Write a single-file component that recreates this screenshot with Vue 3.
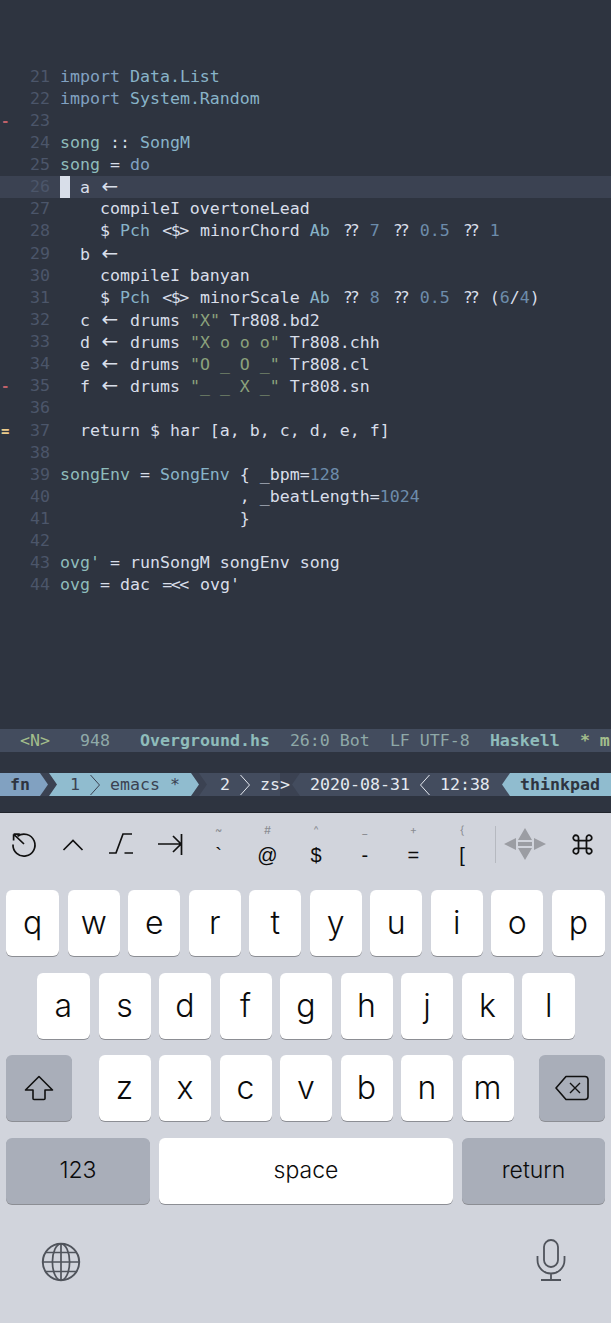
<script setup>
const arrow = ['a', '←']
const q = ['q', '??']
const lines = [
  { n: 21, t: [['k', 'import '], ['c', 'Data.List']] },
  { n: 22, t: [['k', 'import '], ['c', 'System.Random']] },
  { n: 23, t: [], g: 'del' },
  { n: 24, t: [['f', 'song'], ['w', ' :: '], ['c', 'SongM']] },
  { n: 25, t: [['f', 'song'], ['w', ' = '], ['k', 'do']] },
  { n: 26, t: [['w', '  a '], arrow], cur: true },
  { n: 27, t: [['w', '    compileI overtoneLead']] },
  { n: 28, t: [['w', '    $ '], ['c', 'Pch'], ['w', ' '], ['l', '<$>'], ['w', ' minorChord '], ['c', 'Ab'], ['w', ' '], q, ['w', ' '], ['m', '7'], ['w', ' '], q, ['w', ' '], ['m', '0.5'], ['w', ' '], q, ['w', ' '], ['m', '1']] },
  { n: 29, t: [['w', '  b '], arrow] },
  { n: 30, t: [['w', '    compileI banyan']] },
  { n: 31, t: [['w', '    $ '], ['c', 'Pch'], ['w', ' '], ['l', '<$>'], ['w', ' minorScale '], ['c', 'Ab'], ['w', ' '], q, ['w', ' '], ['m', '8'], ['w', ' '], q, ['w', ' '], ['m', '0.5'], ['w', ' '], q, ['w', ' ('], ['m', '6'], ['w', '/'], ['m', '4'], ['w', ')']] },
  { n: 32, t: [['w', '  c '], arrow, ['w', ' drums '], ['s', '"X"'], ['w', ' Tr808.bd2']] },
  { n: 33, t: [['w', '  d '], arrow, ['w', ' drums '], ['s', '"X o o o"'], ['w', ' Tr808.chh']] },
  { n: 34, t: [['w', '  e '], arrow, ['w', ' drums '], ['s', '"O _ O _"'], ['w', ' Tr808.cl']] },
  { n: 35, t: [['w', '  f '], arrow, ['w', ' drums '], ['s', '"_ _ X _"'], ['w', ' Tr808.sn']], g: 'del' },
  { n: 36, t: [] },
  { n: 37, t: [['w', '  return $ har [a, b, c, d, e, f]']], g: 'mod' },
  { n: 38, t: [] },
  { n: 39, t: [['f', 'songEnv'], ['w', ' = '], ['c', 'SongEnv'], ['w', ' { _bpm='], ['m', '128']] },
  { n: 40, t: [['w', '                  , _beatLength='], ['m', '1024']] },
  { n: 41, t: [['w', '                  }']] },
  { n: 42, t: [] },
  { n: 43, t: [['f', "ovg'"], ['w', ' = runSongM songEnv song']] },
  { n: 44, t: [['f', 'ovg'], ['w', ' = dac '], ['l', '=<<'], ['w', " ovg'"]] },
]
const rows = [
  ['q', 'w', 'e', 'r', 't', 'y', 'u', 'i', 'o', 'p'],
  ['a', 's', 'd', 'f', 'g', 'h', 'j', 'k', 'l'],
  ['z', 'x', 'c', 'v', 'b', 'n', 'm'],
]
const symbols = [
  ['~', '`'], ['#', '@'], ['^', '$'], ['_', '-'], ['+', '='], ['{', '['],
]
</script>

<template>
  <div class="screen">
    <main class="editor">
      <div v-for="l in lines" :key="l.n" class="line" :class="{ current: l.cur }">
        <span class="gutter" :class="l.g">{{ l.g === 'del' ? '-' : l.g === 'mod' ? '=' : '' }}</span>
        <span class="num">{{ l.n }}</span>
        <span class="code"><span v-if="l.cur" class="cursor"></span><span
          v-for="(s, i) in l.t" :key="i" :class="s[0]">{{ s[1] }}</span></span>
      </div>
    </main>

    <div class="modeline">
      <span class="ml-mode">&lt;N&gt;</span>
      <span class="ml-dim ml-size">948</span>
      <b class="ml-file">Overground.hs</b>
      <span class="ml-dim ml-pos">26:0 Bot</span>
      <span class="ml-dim ml-enc">LF UTF-8</span>
      <b class="ml-file ml-lang">Haskell</b>
      <b class="ml-branch">* m</b>
    </div>

    <div class="tmux">
      <span class="seg seg-fn">fn</span>
      <span class="seg seg-emacs"><span>1</span>
        <svg class="chev" width="10" height="22" viewBox="0 0 10 22" fill="none" stroke="#3b4252" stroke-width="1"><path d="M.5 1 9.500 11 .5 21" /></svg>
        <span>emacs *</span></span>
      <span class="seg seg-zs"><span>2</span>
        <svg class="chev" width="10" height="22" viewBox="0 0 10 22" fill="none" stroke="#e5e9f0" stroke-width="1"><path d="M.5 1 9.500 11 .5 21" /></svg>
        <span>zs&gt;</span></span>
      <span class="seg seg-date"><span>2020-08-31</span>
        <svg class="chev" width="10" height="22" viewBox="0 0 10 22" fill="none" stroke="#e5e9f0" stroke-width="1"><path d="M9.500 1 .5 11 9.500 21" /></svg>
        <span>12:38</span></span>
      <span class="seg seg-host">thinkpad</span>
    </div>

    <section class="keyboard">
      <div class="toolbar">
        <div class="tools">
          <svg class="tool" width="28" height="28" viewBox="0 0 28 28" fill="none" stroke="#111" stroke-width="1.7">
            <path d="M7.500 6.200A11 11 0 1 1 3 14.500" />
            <path d="M3.600 4.200h6.200M3.600 4.200v6.200M3.600 4.200 14 14" />
          </svg>
          <svg class="tool" width="28" height="28" viewBox="0 0 28 28" fill="none" stroke="#111" stroke-width="1.7">
            <path d="M4.500 20 14 10.500l9.500 9.500" />
          </svg>
          <svg class="tool" width="28" height="28" viewBox="0 0 28 28" fill="none" stroke="#111" stroke-width="1.7">
            <path d="M2 23h7L16 4h9M17.500 23H26" />
          </svg>
          <svg class="tool" width="28" height="28" viewBox="0 0 28 28" fill="none" stroke="#111" stroke-width="1.7">
            <path d="M2 14h23M17 6l8 8-8 8M25.500 4v21" />
          </svg>
        </div>
        <div class="symbols">
          <div v-for="s in symbols" :key="s[1]" class="sym">
            <span class="sym-top">{{ s[0] }}</span>
            <span class="sym-main">{{ s[1] }}</span>
          </div>
        </div>
        <div class="divider"></div>
        <svg class="dpad" width="42" height="32" viewBox="0 0 42 32" fill="#9b9da3">
          <path d="M21 0l7 12H14zM21 32l-7-12h14zM0 16l12-6v12zM42 16l-12 6V10z" />
          <rect x="14" y="14" width="14" height="4" />
        </svg>
        <svg class="cmd" width="23" height="23" viewBox="0 0 26 26" fill="none" stroke="#111" stroke-width="2">
          <path d="M8.500 8.500h9v9h-9zM8.500 8.500H6A3 3 0 1 1 8.500 5.500zM17.500 8.500V6A3 3 0 1 1 20.500 8.500zM17.500 17.500H20A3 3 0 1 1 17.500 20.500zM8.500 17.500V20A3 3 0 1 1 5.500 17.500z" />
        </svg>
      </div>

      <div class="keys">
        <div class="row"><button v-for="k in rows[0]" :key="k" class="key" :class="{ edge: k === 'q' || k === 'p' }">{{ k }}</button></div>
        <div class="row row2"><button v-for="k in rows[1]" :key="k" class="key" :class="{ edge: k === 'a' || k === 'l' }">{{ k }}</button></div>
        <div class="row row3">
          <button class="key fn shift" aria-label="shift">
            <svg width="30" height="26" viewBox="0 0 30 26" fill="none" stroke="#111" stroke-width="1.6" stroke-linejoin="round">
              <path d="M15 1.500 1.500 15H9v8.500a1 1 0 0 0 1 1h10a1 1 0 0 0 1-1V15h7.500z" />
            </svg>
          </button>
          <div class="letters"><button v-for="k in rows[2]" :key="k" class="key">{{ k }}</button></div>
          <button class="key fn shift" aria-label="delete">
            <svg width="34" height="26" viewBox="0 0 34 26" fill="none" stroke="#111" stroke-width="1.6" stroke-linejoin="round">
              <path d="M11 1.500h19a3 3 0 0 1 3 3v17a3 3 0 0 1-3 3H11L1 13z" />
              <path d="M15 8l10 10M25 8 15 18" stroke-width="1.4" />
            </svg>
          </button>
        </div>
        <div class="row row4">
          <button class="key fn wide small">123</button>
          <button class="key space small">space</button>
          <button class="key fn ret small">return</button>
        </div>
      </div>

      <div class="bottom">
        <svg width="40" height="40" viewBox="0 0 40 40" fill="none" stroke="#50545c" stroke-width="1.7">
          <circle cx="20" cy="20" r="18.200" stroke-width="2" />
          <ellipse cx="20" cy="20" rx="8.600" ry="18.200" />
          <path d="M20 2v36M2 20h36M5 10.500h30M5 29.500h30" />
        </svg>
        <svg class="mic" width="30" height="42" viewBox="0 0 30 42" fill="none" stroke="#50545c" stroke-width="1.8">
          <rect x="8" y="1" width="14" height="27" rx="7" />
          <path d="M1.500 17v4a13.500 13.500 0 0 0 27 0v-4M15 35v6M5 41h20" />
        </svg>
      </div>
    </section>
  </div>
</template>

<style>
html, body { margin: 0; background: #2e3440; }
</style>

<style scoped>
.screen { width: 611px; height: 1323px; display: flex; flex-direction: column; background: #2e3440; overflow: hidden; font-family: "DejaVu Sans Mono", monospace; }

.editor { padding-top: 65.5px; height: 729px; box-sizing: border-box; font-size: 16.6px; }
.line { height: 22.13px; line-height: 22.13px; display: flex; white-space: pre; }
.line.current { background: #3b4252; }
.gutter { width: 30px; height: 22px; font-size: 14px; font-weight: bold; padding-left: 1px; box-sizing: border-box; }
.gutter.del { color: #bf616a; }
.gutter.mod { color: #ebcb8b; }
.num { width: 30px; color: #4c566a; }
.code { position: relative; color: #d8dee9; }
.cursor { display: inline-block; width: 10px; height: 22px; background: #d8dee9; vertical-align: top; margin-right: -10px; }
.w { color: #d8dee9; }
.k { color: #81a1c1; }
.c { color: #88b3c8; }
.f { color: #8fbcbb; }
.m { color: #6d8cab; }
.s { color: #a3be8c; opacity: .8; }
.a { display: inline-block; width: 20px; text-align: center; font: 20px/1 "DejaVu Sans", sans-serif; color: #d8dee9; vertical-align: baseline; }
.q { display: inline-block; width: 20px; text-align: center; letter-spacing: -3px; color: #d8dee9; }
.l { display: inline-block; width: 30px; text-align: center; letter-spacing: -1.500px; color: #d8dee9; }

.modeline { height: 23px; line-height: 23px; background: #434c5e; color: #8fbcbb; white-space: pre; font-size: 16.6px; display: flex; overflow: hidden; }
.ml-mode { margin-left: 20px; width: 60px; color: #a3be8c; }
.ml-dim { color: #8fa9a8; }
.ml-size { width: 60px; }
.ml-file { font-weight: bold; }
.ml-pos { margin-left: 20px; width: 100px; }
.ml-enc { width: 100px; }
.ml-lang { width: 90px; }
.ml-branch { color: #a3be8c; }

.tmux { margin-top: 21px; height: 23px; line-height: 23px; background: #3b4252; color: #e5e9f0; font-size: 16.6px; display: flex; white-space: pre; }
.seg { display: flex; align-items: center; height: 23px; box-sizing: border-box; flex: none; }
.seg-fn { width: 49px; padding-left: 10px; background: #81a1c1; color: #2e3440; font-weight: bold; clip-path: polygon(0 0, 40px 0, 48px 50%, 40px 100%, 0 100%); }
.seg-emacs { width: 150px; padding-left: 21px; background: #90bccf; color: #3b4252; clip-path: polygon(0 0, 142px 0, 150px 50%, 142px 100%, 0 100%, 8px 50%); }
.seg-zs { width: 93px; padding-left: 21px; background: linear-gradient(90deg, #434c5e 81px, #3b4252 81px); clip-path: polygon(0 0, 100% 0, 100% 100%, 0 100%, 8px 50%); }
.seg-date { width: 218px; padding-left: 18px; background: #434c5e; clip-path: polygon(8px 0, 100% 0, 100% 100%, 8px 100%, 0 50%); }
.seg-host { width: 109px; margin-left: -8px; padding-left: 18px; background: #90bccf; color: #2e3440; font-weight: bold; clip-path: polygon(8px 0, 100% 0, 100% 100%, 8px 100%, 0 50%); }
.chev { margin: 0 10px; flex: none; }

.keyboard { margin-top: 16px; flex: 1; background: #d1d4dc; border-top: 1px solid #20242c; font-family: Inter, "Liberation Sans", sans-serif; color: #0b0b0b; }
.toolbar { height: 77px; display: flex; align-items: center; box-sizing: border-box; padding: 0 0 15px 10px; }
.tools { display: flex; gap: 20.700px; }
.tool { flex: none; }
.symbols { display: flex; margin-left: 10.300px; }
.sym { width: 48.700px; height: 48px; display: flex; flex-direction: column; align-items: center; justify-content: space-between; }
.sym-top { font-size: 11px; color: #8a8c92; line-height: 14px; margin-top: 3px; }
.sym-main { font-size: 20px; line-height: 24px; font-family: "Liberation Sans", sans-serif; margin-bottom: 1px; }
.divider { width: 1px; height: 37px; background: #b6b9c0; margin-left: 8.400px; }
.dpad { margin-left: 8px; flex: none; }
.cmd { margin-left: 25px; flex: none; }

.keys { display: flex; flex-direction: column; gap: 16.700px; padding: 0 6px; }
.row { display: flex; justify-content: center; gap: 8.500px; }
.key { flex: none; width: 52px; height: 66px; border: 0; border-radius: 6px; background: #fff; box-shadow: 0 1px 0 #8c8e94; font: 300 32px/1 Inter, sans-serif; color: #0b0b0b; display: flex; align-items: center; justify-content: center; padding: 0; box-sizing: border-box; }
.edge { width: 53.250px; }
.row2 { padding-left: 1px; }
.row3 { justify-content: space-between; }
.letters { display: flex; gap: 8.500px; margin-left: 1px; }
.fn { background: #a9aeb9; }
.shift { width: 66px; }
.row4 { gap: 9px; }
.wide { width: 144px; }
.ret { width: 143px; }
.space { width: 294px; }
.small { font-size: 23px; padding: 0 0 2px; }

.bottom { display: flex; justify-content: space-between; padding: 38px 45px 0 41px; align-items: flex-start; }
.mic { margin-top: -3px; }
</style>
